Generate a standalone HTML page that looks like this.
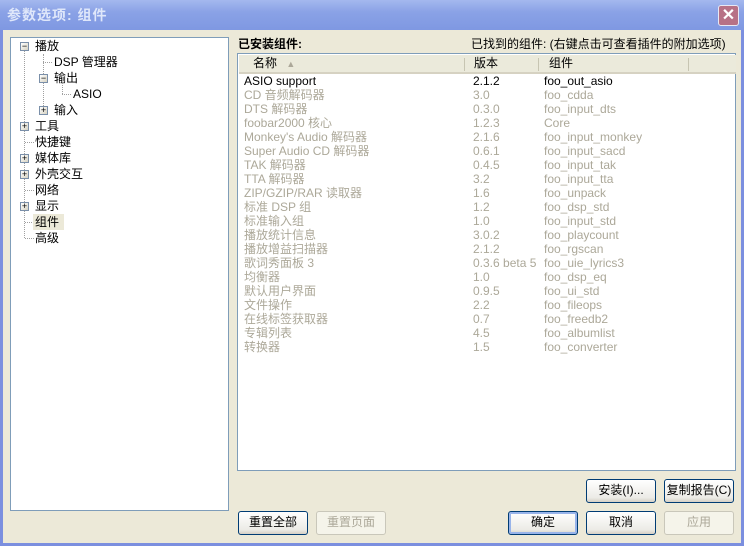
<!DOCTYPE html>
<html><head><meta charset="utf-8"><style>
*{margin:0;padding:0;box-sizing:border-box}
body{width:744px;height:546px;overflow:hidden;background:#7b8fdf;font-family:"Liberation Sans","Noto Sans CJK SC",sans-serif;font-size:12px;position:relative}
.title{position:absolute;left:0;top:0;width:744px;height:30px;background:linear-gradient(#a4b8ee,#8aa2e6 40%,#7f98e2);}
.title span{position:absolute;left:7px;top:5px;color:#dfe7fa;font-weight:bold;font-size:14px;line-height:20px;letter-spacing:1px}
.close{position:absolute;left:718px;top:5px;width:21px;height:21px;border:1px solid #e8e8f4;border-radius:3px;background:#b77186;color:#fff;text-align:center;font-size:16px;line-height:19px;font-weight:bold}
.client{position:absolute;left:3px;top:30px;width:738px;height:513px;background:#ece9d8}
.abs{position:absolute;white-space:nowrap;line-height:16px}
.tree{position:absolute;left:10px;top:37px;width:219px;height:474px;background:#fff;border:1px solid #7f9db9}
.list{position:absolute;left:237px;top:53px;width:499px;height:418px;background:#fff;border:1px solid #7f9db9}
.hdr{position:absolute;left:1px;top:1px;width:497px;height:19px;background:#ebeadb;border-bottom:2px solid #d6d2c2}
.sep{position:absolute;top:3px;width:1px;height:13px;background:#c7c5b2}
.row{position:absolute;height:14px;line-height:14px;white-space:nowrap}
.g{color:#aca899}
.box{position:absolute;width:9px;height:9px;border:1px solid #7a8fa9;background:linear-gradient(135deg,#fff,#d6d2c2);font-size:9px;line-height:7px;text-align:center;color:#000}
.dv{position:absolute;border-left:1px dotted #a0a0a0}
.dh{position:absolute;border-top:1px dotted #a0a0a0}
.btn{position:absolute;width:70px;height:24px;border:1px solid #003c74;border-radius:3px;background:linear-gradient(#fff,#ecebe6 80%,#d6d0c5);text-align:center;line-height:21px}
.btn.dis{border-color:#c9c7ba;background:#f5f4ea;color:#aca899}
.btn.def{box-shadow:inset 0 0 0 2px #98b4ea}
</style></head><body>
<div class="title"><span>参数选项: 组件</span><div class="close">✕</div></div>
<div class="client"></div>
<div class="tree">
 <div class="dv" style="left:13px;top:12px;height:188px"></div>
 <div class="dv" style="left:32px;top:16px;height:56px"></div>
 <div class="dv" style="left:51px;top:44px;height:12px"></div>
 <div class="dh" style="left:32px;top:24px;width:9px"></div>
 <div class="dh" style="left:51px;top:56px;width:9px"></div>
 <div class="dh" style="left:14px;top:104px;width:9px"></div>
 <div class="dh" style="left:14px;top:152px;width:9px"></div>
 <div class="dh" style="left:14px;top:184px;width:9px"></div>
 <div class="dh" style="left:14px;top:200px;width:9px"></div>
 <div class="box" style="left:9px;top:4px">−</div><div class="abs" style="left:24px;top:0px">播放</div>
 <div class="abs" style="left:43px;top:16px">DSP 管理器</div>
 <div class="box" style="left:28px;top:36px">−</div><div class="abs" style="left:43px;top:32px">输出</div>
 <div class="abs" style="left:62px;top:48px">ASIO</div>
 <div class="box" style="left:28px;top:68px">+</div><div class="abs" style="left:43px;top:64px">输入</div>
 <div class="box" style="left:9px;top:84px">+</div><div class="abs" style="left:24px;top:80px">工具</div>
 <div class="abs" style="left:24px;top:96px">快捷键</div>
 <div class="box" style="left:9px;top:116px">+</div><div class="abs" style="left:24px;top:112px">媒体库</div>
 <div class="box" style="left:9px;top:132px">+</div><div class="abs" style="left:24px;top:128px">外壳交互</div>
 <div class="abs" style="left:24px;top:144px">网络</div>
 <div class="box" style="left:9px;top:164px">+</div><div class="abs" style="left:24px;top:160px">显示</div>
 <div class="abs" style="left:22px;top:176px;width:31px;height:16px;background:#ece9d8;padding-left:2px">组件</div>
 <div class="abs" style="left:24px;top:192px">高级</div>
</div>
<div class="abs" style="left:238px;top:36px;font-weight:bold">已安装组件:</div>
<div class="abs" style="left:471px;top:36px">已找到的组件:  (右键点击可查看插件的附加选项)</div>
<div class="list">
 <div class="hdr">
  <div class="abs" style="left:14px;top:0px">名称 <span style="color:#aca899;font-size:9px;margin-left:6px">▲</span></div>
  <div class="sep" style="left:225px"></div>
  <div class="abs" style="left:235px;top:0px">版本</div>
  <div class="sep" style="left:299px"></div>
  <div class="abs" style="left:310px;top:0px">组件</div>
  <div class="sep" style="left:449px"></div>
 </div>
 <div id="rows"></div>
</div>
<script>
var d=[["ASIO support","2.1.2","foo_out_asio"],["CD 音频解码器","3.0","foo_cdda"],["DTS 解码器","0.3.0","foo_input_dts"],["foobar2000 核心","1.2.3","Core"],["Monkey's Audio 解码器","2.1.6","foo_input_monkey"],["Super Audio CD 解码器","0.6.1","foo_input_sacd"],["TAK 解码器","0.4.5","foo_input_tak"],["TTA 解码器","3.2","foo_input_tta"],["ZIP/GZIP/RAR 读取器","1.6","foo_unpack"],["标准 DSP 组","1.2","foo_dsp_std"],["标准输入组","1.0","foo_input_std"],["播放统计信息","3.0.2","foo_playcount"],["播放增益扫描器","2.1.2","foo_rgscan"],["歌词秀面板 3","0.3.6 beta 5","foo_uie_lyrics3"],["均衡器","1.0","foo_dsp_eq"],["默认用户界面","0.9.5","foo_ui_std"],["文件操作","2.2","foo_fileops"],["在线标签获取器","0.7","foo_freedb2"],["专辑列表","4.5","foo_albumlist"],["转换器","1.5","foo_converter"]];
var h="";d.forEach(function(r,i){var c=i?"row g":"row";var t=20+i*14;h+='<div class="'+c+'" style="left:6px;top:'+t+'px">'+r[0]+'</div><div class="'+c+'" style="left:235px;top:'+t+'px">'+r[1]+'</div><div class="'+c+'" style="left:306px;top:'+t+'px">'+r[2]+'</div>';});
document.getElementById("rows").outerHTML=h;
</script>
<div class="btn" style="left:586px;top:479px">安装(I)...</div>
<div class="btn" style="left:664px;top:479px">复制报告(C)</div>
<div class="btn" style="left:238px;top:511px">重置全部</div>
<div class="btn dis" style="left:316px;top:511px">重置页面</div>
<div class="btn def" style="left:508px;top:511px">确定</div>
<div class="btn" style="left:586px;top:511px">取消</div>
<div class="btn dis" style="left:664px;top:511px">应用</div>
</body></html>
